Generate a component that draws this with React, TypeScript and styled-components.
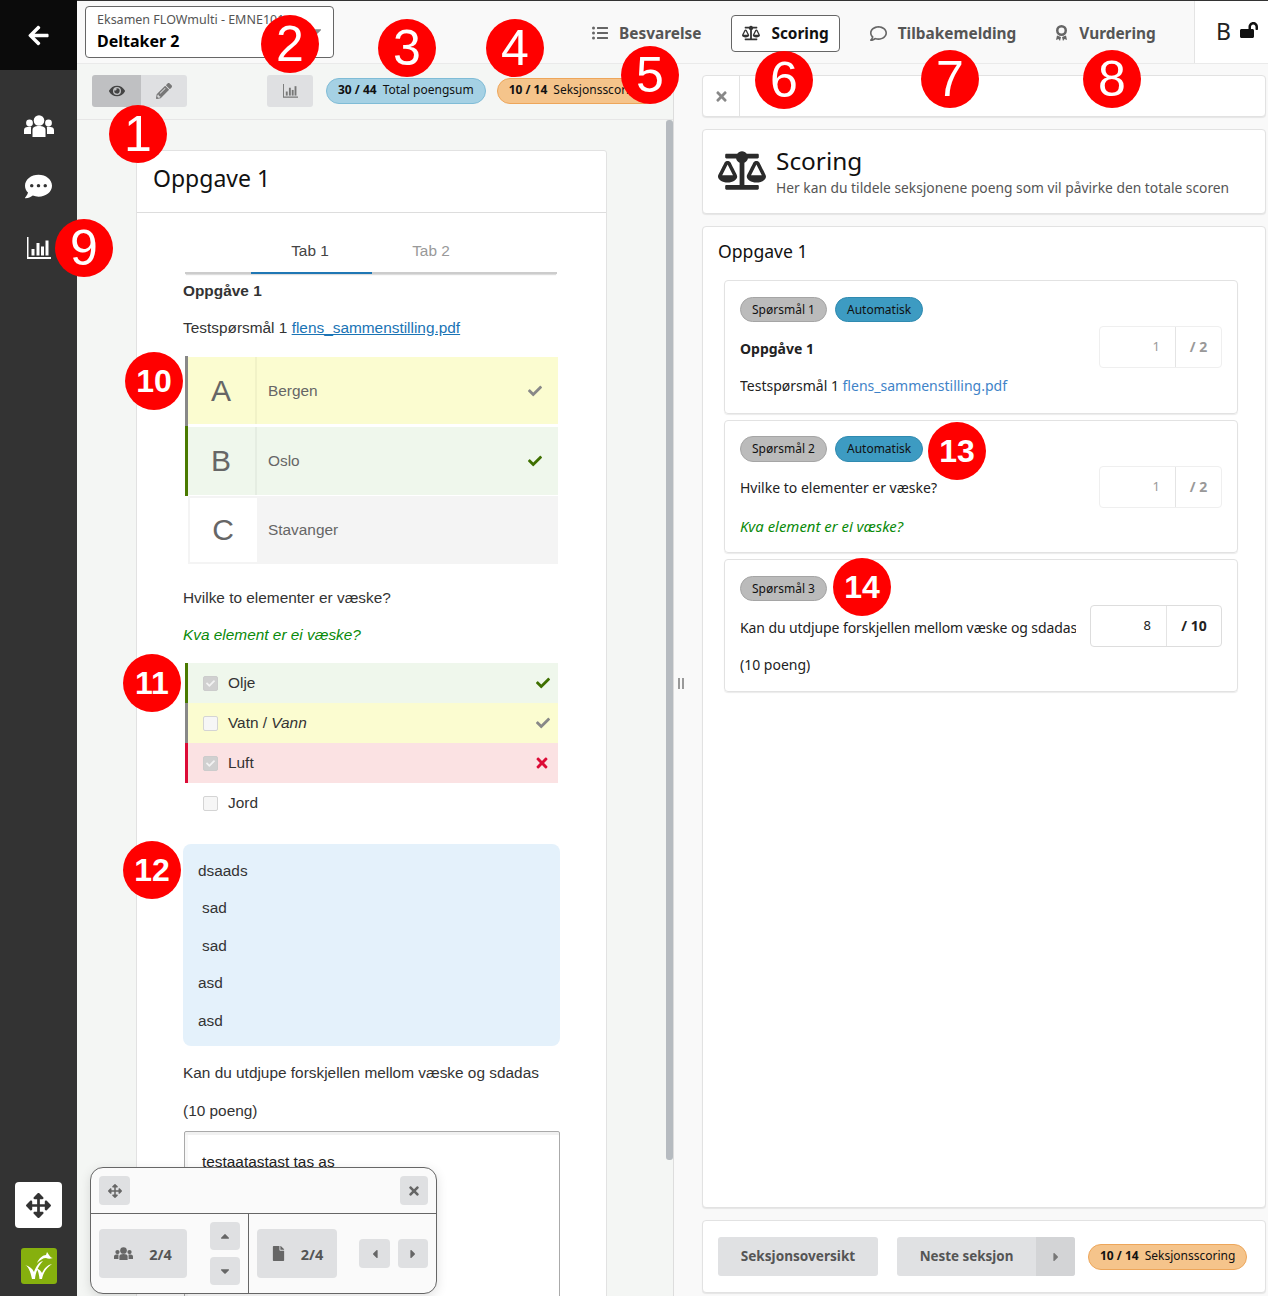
import React from "react";
import styled, { createGlobalStyle } from "styled-components";
import {
  FaArrowLeft, FaCommentDots, FaArrowsAlt, FaEye, FaPencilAlt, FaTimes,
  FaBalanceScale, FaListUl, FaRegComment, FaLockOpen, FaCheck, FaFile, FaCaretUp, FaCaretDown,
  FaCaretLeft, FaCaretRight,
} from "react-icons/fa";

const ui = `"Noto Sans", "Liberation Sans", sans-serif`;
const body = `"Liberation Sans", Arial, sans-serif`;

const Global = createGlobalStyle`
  html, body { margin: 0; padding: 0; background: #fff; }
  * { box-sizing: border-box; }
`;

const Page = styled.div`
  position: relative; display: flex; width: 1268px; height: 1296px; overflow: hidden;
  font-family: ${ui}; color: #222;
`;
const Sidebar = styled.aside`
  width: 77px; flex: none; display: flex; flex-direction: column; align-items: center;
  background: #333; color: #fff;
`;
const BackBar = styled.div`
  width: 100%; height: 70px; background: #0b0b0b; display: flex; align-items: center; justify-content: center;
  font-size: 23px;
`;
const SideNav = styled.nav`
  display: flex; flex-direction: column; align-items: center; gap: 30px; padding-top: 40px; flex: 1;
`;
const NavItem = styled.div`height: 31px; display: flex; align-items: center; justify-content: center;`;
const MoveBox = styled.div`
  width: 47px; height: 46px; background: #fff; color: #333; border-radius: 4px; display: flex;
  align-items: center; justify-content: center; font-size: 25px; margin-bottom: 20px;
`;
const Logo = styled.div`
  width: 36px; height: 36px; background: #86b00e; border-radius: 3px; margin-bottom: 12px; display: flex;
  align-items: center; justify-content: center;
`;
const Main = styled.div`flex: 1; display: flex; flex-direction: column; min-width: 0;`;
const Header = styled.header`
  height: 64px; flex: none; display: flex; align-items: stretch; background: #f9f9f9;
  border-top: 1px solid #333; border-bottom: 1px solid #eaeaea; padding-left: 8px;
`;
const Selector = styled.div`
  position: relative; width: 249px; height: 52px; margin-top: 5px; background: #fff; border: 1px solid #666; border-radius: 4px;
  padding: 4px 11px; overflow: hidden;
`;
const SelTop = styled.div`font-size: 12.5px; color: #555; line-height: 18px; white-space: nowrap;`;
const SelBot = styled.div`font-size: 16px; font-weight: 700; color: #000; line-height: 24px;`;
const Drop = styled.span`position: absolute; right: 9px; top: 16px; color: #888; font-size: 14px;`;
const Tabs = styled.div`
  flex: 1; display: flex; align-items: center; padding: 2px 0 0 247px;
`;
const HTab = styled.div<{ $active?: boolean; $w: number }>`
  display: flex; align-items: center; gap: 11px; height: 37px; padding: 0 10px; margin-right: ${p => p.$w}px;
  font-size: 15.4px; font-weight: 700; white-space: nowrap; color: ${p => (p.$active ? "#111" : "#555")};
  border: 1px solid ${p => (p.$active ? "#666" : "transparent")}; border-radius: 4px;
  background: ${p => (p.$active ? "#fff" : "transparent")};
  svg { color: ${p => (p.$active ? "#333" : "#666")}; font-size: 16px; flex: none; }
`;
const Lang = styled.div`
  width: 74px; flex: none; border-left: 1px solid #e4e4e4; background: #fff; display: flex; align-items: center;
  gap: 9px; font-size: 23px; color: #222; padding: 0 0 2px 21px; font-weight: 400;
  svg { font-size: 18px; color: #111; margin-top: -2px; flex: none; }
`;
const Work = styled.div`flex: 1; display: flex; min-height: 0;`;
const LeftPane = styled.section`width: 596px; flex: none; display: flex; flex-direction: column; background: #f4f6f4;`;
const Toolbar = styled.div`
  height: 56px; flex: none; display: flex; align-items: flex-start; padding: 11px 0 0 15px; border-bottom: 1px solid #e6e6e6; overflow: hidden;
`;
const Toggle = styled.div`display: flex; height: 32px; border-radius: 3px; overflow: hidden;`;
const ToggleBtn = styled.div<{ $on?: boolean; $w: number }>`
  width: ${p => p.$w}px; display: flex; align-items: center; justify-content: center; font-size: 16px;
  background: ${p => (p.$on ? "#bfc0c2" : "#dfe0e2")}; color: ${p => (p.$on ? "#444" : "#777")};
`;
const ChartBtn = styled.div`
  width: 46px; height: 32px; margin-left: 80px; border-radius: 3px; background: #dfe0e2; color: #777;
  display: flex; align-items: center; justify-content: center;
`;
const Pill = styled.div<{ $tone: "blue" | "orange" }>`
  height: 26px; border-radius: 13px; padding: 0 11px 3px; display: inline-flex; align-items: center; gap: 6px; flex: none;
  font-size: 12px; color: #111; white-space: nowrap;
  background: ${p => (p.$tone === "blue" ? "#a5d1e4" : "#f5c48b")};
  border: 1px solid ${p => (p.$tone === "blue" ? "#7fbcd6" : "#eda65a")};
  b { font-weight: 700; }
`;
const ToolPill = styled(Pill)<{ $ml: number }>`margin: 3px 0 0 ${p => p.$ml}px;`;
const LeftBody = styled.div`flex: 1; display: flex; min-height: 0;`;
const Scroll = styled.div`flex: 1; min-width: 0; overflow: hidden; padding: 30px 0 0 59px;`;
const Thumb = styled.div`width: 7px; height: 1040px; background: #b6bbc0; flex: none; border-radius: 3px;`;
const Sheet = styled.article`
  width: 471px; height: 1300px; background: #fff; border: 1px solid #e2e2e2; border-radius: 3px; font-family: ${body};
  font-size: 15.4px; color: #333;
`;
const SheetHead = styled.div`
  height: 62px; border-bottom: 1px solid #ddd; padding: 9px 16px; font-family: ${ui}; font-size: 23px; color: #111; line-height: 36px;
`;
const SheetBody = styled.div`padding: 17px 47px 0 46px;`;
const TabRow = styled.div`
  height: 44px; margin: 0 2px 0 2px; display: flex; padding-left: 66px; border-bottom: 2px solid #ccc; box-shadow: 0 2px 1px -1px #ddd;
`;
const Tab = styled.div<{ $on?: boolean }>`
  width: 121px; height: 44px; text-align: center; line-height: 42px; color: ${p => (p.$on ? "#444" : "#999")};
  border-bottom: 2px solid ${p => (p.$on ? "#1f77b4" : "transparent")}; padding-right: 3px;
`;
const P = styled.p<{ $t: number }>`
  margin: ${p => p.$t}px 0 0 0; line-height: 21px; white-space: pre-wrap;
`;
const Link = styled.a`color: #1a74b5; text-decoration: underline;`;
const Green = styled.em`color: #0a8a0a;`;
const Opts = styled.div`margin-top: 18px; width: 373px; margin-left: 2px;`;
const Opt = styled.div<{ $bar: string; $h: number; $pt: number; $mb: number }>`
  display: flex; height: ${p => p.$h}px; padding: ${p => p.$pt}px 0 ${p => p.$mb}px 0; border-left: 3px solid ${p => p.$bar};
`;
const OptIn = styled.div<{ $bg: string }>`flex: 1; display: flex; align-items: center; background: ${p => p.$bg};`;
const Letter = styled.div<{ $white?: boolean }>`
  width: 69px; height: 100%; display: flex; align-items: center; justify-content: center; font-size: 30px; color: #666; padding-right: 1px;
  border-right: 2px solid rgba(0,0,0,.04);
  ${p => p.$white && "background:#fff; border:2px solid #f4f4f4; border-right:0;"}
`;
const OptText = styled.span`margin-left: 11px; color: #666; flex: 1;`;
const Mark = styled.span<{ $c: string; $r: number; $s?: number }>`
  color: ${p => p.$c}; font-size: ${p => p.$s ?? 14}px; margin-right: ${p => p.$r}px; display: flex;
`;
const Checks = styled.div`margin-top: 18px; width: 373px; margin-left: 2px;`;
const CheckRow = styled.div<{ $bg: string; $bar: string }>`
  height: 40px; display: flex; align-items: center; background: ${p => p.$bg}; border-left: 3px solid ${p => p.$bar};
  padding-left: 15px; color: #333;
`;
const Box = styled.span<{ $on?: boolean }>`
  width: 15px; height: 15px; border-radius: 2px; margin-right: 10px; flex: none; display: flex; align-items: center; justify-content: center;
  background: ${p => (p.$on ? "#d0d0d0" : "#f6f6f6")}; border: 1px solid ${p => (p.$on ? "#ccc" : "#d4d4d4")}; color: #f2f2f2; font-size: 9px;
`;
const RowText = styled.span`flex: 1;`;
const Blue = styled.div`
  margin-top: 21px; background: #e4f1fb; border-radius: 8px; width: 377px; height: 202px; padding: 16px 15px; color: #333;
`;
const BlueLine = styled.div<{ $i?: boolean }>`height: 37.4px; line-height: 21px; padding-left: ${p => (p.$i ? 4 : 0)}px;`;
const Answer = styled.div`
  margin: 10px 0 0 1px; width: 376px; height: 200px; border: 1px solid #aaa; border-radius: 2px; padding: 21px 17px; color: #222; box-shadow: inset 0 3px 0 #f1f1f1, inset 3px 0 0 #f8f8f8;
`;
const Splitter = styled.div`
  width: 17px; flex: none; background: #f9f9f9; border-left: 1px solid #ddd; display: flex; align-items: flex-start; justify-content: center; padding-top: 614px;
  padding-right: 3px; gap: 2px;
  i { display: block; width: 2px; height: 11px; background: #999; }
`;
const RightPane = styled.section`
  flex: 1; display: flex; flex-direction: column; gap: 12px; background: #f9f9f9; padding: 11px 2px 3px 12px; min-width: 0;
`;
const Card = styled.div`
  background: #fff; border: 1px solid #e2e2e2; border-radius: 4px; box-shadow: 0 1px 1px rgba(0,0,0,.08); flex: none;
`;
const CloseCard = styled(Card)`height: 42px; display: flex;`;
const CloseBtn = styled.div`
  width: 37px; border-right: 1px solid #e2e2e2; display: flex; align-items: center; justify-content: center; color: #888; font-size: 15px;
`;
const TitleCard = styled(Card)`height: 85px; display: flex; padding: 11px 15px 13px; gap: 10px; align-items: center;`;
const TitleIcon = styled.div`font-size: 43px; color: #2b2b2b; display: flex; width: 48px; svg { width: 48px; }`;
const TitleText = styled.div`display: flex; flex-direction: column;`;
const H1 = styled.div`font-size: 24.4px; line-height: 32px; color: #111; margin-bottom: 2px;`;
const Sub = styled.div`font-size: 13.8px; line-height: 18px; color: #555;`;
const ListCard = styled(Card)`flex: 1; padding: 11px 27px 0 21px; min-height: 0;`;
const H2 = styled.div`font-size: 17.6px; line-height: 26px; color: #111; margin: 0 0 16px -6px;`;
const Q = styled.div<{ $h: number; $p: number }>`
  height: ${p => p.$h}px; border: 1px solid #e2e2e2; border-radius: 4px; box-shadow: 0 1px 1px rgba(0,0,0,.08); margin-bottom: 6px; padding: ${p => p.$p}px 15px 0 15px;
`;
const Tags = styled.div<{ $h: number }>`display: flex; gap: 8px; height: ${p => p.$h}px;`;
const Tag = styled.span<{ $blue?: boolean }>`
  height: 100%; border-radius: 13px; padding: 0 11px 1px; display: flex; align-items: center; font-size: 12px; color: #111; white-space: nowrap;
  background: ${p => (p.$blue ? "#3d9bc2" : "#bbb")}; border: 1px solid ${p => (p.$blue ? "#2f8ab0" : "#a5a5a5")};
`;
const QRow = styled.div`display: flex; gap: 14px; margin-top: 4px;`;
const QText = styled.div<{ $t: number }>`flex: 1; min-width: 0; overflow: hidden; font-size: 14px; line-height: 20px; color: #222; white-space: nowrap; padding-top: ${p => p.$t}px;`;
const QLine = styled.div<{ $t?: number }>`margin-top: ${p => p.$t ?? 0}px;`;
const QLong = styled(QLine)`letter-spacing: -.1px;`;
const QBold = styled.b`font-weight: 700;`;
const QLink = styled.a`color: #3f83c8;`;
const QItalic = styled.em`color: #0a8a0a; font-size: 14.9px;`;
const Score = styled.div<{ $on?: boolean }>`
  flex: none; display: flex; height: 42px; border: 1px solid ${p => (p.$on ? "#ddd" : "#efefef")}; border-radius: 4px; font-size: 13px;
  color: ${p => (p.$on ? "#222" : "#999")}; padding-bottom: 2px;
`;
const ScoreIn = styled.div`
  width: 76px; margin-bottom: -2px; padding: 0 15px 2px 0; border-right: 1px solid #e4e4e4; display: flex; align-items: center; justify-content: flex-end;
`;
const ScoreMax = styled.div<{ $w: number }>`
  width: ${p => p.$w}px; display: flex; align-items: center; justify-content: center; font-weight: 700; font-size: 14px;
`;
const FootCard = styled(Card)`height: 73px; display: flex; align-items: center; padding: 0 15px; `;
const FootBtn = styled.div`
  height: 39px; width: 160px; background: #e0e1e3; border-radius: 3px; display: flex; align-items: center; justify-content: center;
  font-size: 13.6px; font-weight: 700; color: #555; padding-bottom: 3px;
`;
const NextBtn = styled.div`
  height: 39px; width: 178px; margin: 0 13px 0 19px; background: #e0e1e3; border-radius: 3px; display: flex; overflow: hidden;
  font-size: 13.4px; font-weight: 700; color: #555;
`;
const NextLabel = styled.div`flex: 1; display: flex; align-items: center; justify-content: center; padding-bottom: 2px;`;
const NextArrow = styled.div`width: 39px; background: #d3d4d6; display: flex; align-items: center; justify-content: center; font-size: 14px; color: #777;`;
const Float = styled.div`
  position: absolute; left: 90px; top: 1167px; width: 347px; height: 127px; background: #fafafa; border: 1px solid #666;
  border-radius: 13px; box-shadow: 0 3px 12px rgba(0,0,0,.12); display: flex; flex-direction: column; overflow: hidden; font-family: ${ui};
`;
const FloatTop = styled.div`
  height: 46px; flex: none; border-bottom: 1px solid #666; display: flex; justify-content: space-between; align-items: center; padding: 0 8px;
`;
const FloatBody = styled.div`flex: 1; display: flex;`;
const FloatSide = styled.div<{ $w: number; $b?: boolean }>`
  width: ${p => p.$w}px; flex: none; display: flex; align-items: center; padding: 0 8px; ${p => p.$b && "border-right:1px solid #666;"}
`;
const FBtn = styled.div<{ $w: number; $h: number }>`
  width: ${p => p.$w}px; height: ${p => p.$h}px; flex: none; background: #dfe0e2; border-radius: 4px; display: flex; align-items: center; justify-content: center;
  color: #666; font-size: 14px;
`;
const Counter = styled(FBtn)<{ $g: number }>`font-size: 14.5px; font-weight: 700; color: #555; gap: ${p => p.$g}px; svg { color: #666; }`;
const Stack = styled.div`display: flex; flex-direction: column; gap: 7px; margin-left: 23px;`;
const Arrows = styled.div`display: flex; gap: 8px; margin-left: 22px;`;
const Marker = styled.div<{ $x: number; $y: number; $big?: boolean }>`
  position: absolute; left: ${p => p.$x - 29}px; top: ${p => p.$y - 29}px; width: 58px; height: 58px; border-radius: 50%; background: #f00;
  color: #fff; font-family: ${body}; font-size: ${p => (p.$big ? 32 : 50)}px; font-weight: ${p => (p.$big ? 700 : 400)};
  display: flex; align-items: center; justify-content: center; line-height: 1;
`;

const markers: [number, number, number][] = [
  [1, 138, 134], [2, 290, 44], [3, 407, 48], [4, 515, 48], [5, 650, 75], [6, 784, 80], [7, 950, 79], [8, 1112, 79],
  [9, 84, 248], [10, 154, 381], [11, 152, 683], [12, 152, 870], [13, 957, 451], [14, 862, 587],
];

const LogoMark = () => (
  <svg width="30" height="30" viewBox="0 0 30 30" fill="#fff">
    <path d="M1 14 C4 15 6 19 8 28 L11 28 C11.500 22 14 15 19 10 C15 11 12 15 10 21 C8 17 5 15 1 14Z" />
    <path d="M12 17 C14 19 15 23 15.500 28 L18 28 C19 23 21 18 28 13 C23 14 20 18 18 22 C17 20 15 18 12 17Z" />
    <path d="M13 12 C15 7 19 4 22 4 L23 1 L25 4 C26 5 27 7 29 7 C26 8 24 8 22 7 C19 7 16 9 13 12Z" />
  </svg>
);
const UsersIcon = ({ w }: { w: number }) => (
  <svg width={w} viewBox="0 0 30 22" fill="currentColor" aria-hidden="true">
    <circle cx="15" cy="5.500" r="5.300" />
    <circle cx="5.500" cy="8" r="3.400" />
    <circle cx="24.500" cy="8" r="3.400" />
    <path d="M8.500 22 V15 C8.500 12 11 11 15 11 C19 11 21.500 12 21.500 15 V22Z" />
    <path d="M0 19 V15 C0 12.500 2 11.800 5.500 11.800 C6.500 11.800 7.200 12 7.200 12 C7 13 7 14 7 15 V19Z" />
    <path d="M30 19 V15 C30 12.500 28 11.800 24.500 11.800 C23.500 11.800 22.800 12 22.800 12 C23 13 23 14 23 15 V19Z" />
  </svg>
);
const ChartIcon = ({ w }: { w: number }) => (
  <svg width={w} viewBox="0 0 24 22" fill="currentColor" aria-hidden="true">
    <path d="M0 0 H1.500 V20 H24 V22 H0Z" />
    <rect x="4.500" y="12" width="3" height="6.500" />
    <rect x="9.500" y="6" width="3" height="12.500" />
    <rect x="14" y="9.500" width="3" height="9" />
    <rect x="18.500" y="3.500" width="3" height="15" />
  </svg>
);
const AwardIcon = () => (
  <svg width="13" height="16" viewBox="0 0 13 16" fill="currentColor" aria-hidden="true">
    <path fillRule="evenodd" d="M6.500 0 A5.500 5.500 0 1 1 6.500 11 A5.500 5.500 0 1 1 6.500 0Z M6.500 2.500 A3 3 0 1 0 6.500 8.500 A3 3 0 1 0 6.500 2.500Z" />
    <path d="M2 10.500 L1 15 L3.500 14 L5 16 L6 12Z M11 10.500 L12 15 L9.500 14 L8 16 L7 12Z" />
  </svg>
);

export default function App() {
  return (
    <Page>
      <Global />
      <Sidebar>
        <BackBar><FaArrowLeft /></BackBar>
        <SideNav>
          <NavItem><UsersIcon w={30} /></NavItem>
          <NavItem><FaCommentDots size={27} /></NavItem>
          <NavItem><ChartIcon w={24} /></NavItem>
        </SideNav>
        <MoveBox><FaArrowsAlt /></MoveBox>
        <Logo><LogoMark /></Logo>
      </Sidebar>
      <Main>
        <Header>
          <Selector>
            <SelTop>Eksamen FLOWmulti - EMNE101</SelTop>
            <SelBot>Deltaker 2</SelBot>
            <Drop><FaCaretDown /></Drop>
          </Selector>
          <Tabs>
            <HTab $w={19}><FaListUl />Besvarelse</HTab>
            <HTab $active $w={19}><FaBalanceScale size={18} />Scoring</HTab>
            <HTab $w={17}><FaRegComment size={17} />Tilbakemelding</HTab>
            <HTab $w={0}><AwardIcon />Vurdering</HTab>
          </Tabs>
          <Lang>B<FaLockOpen /></Lang>
        </Header>
        <Work>
          <LeftPane>
            <Toolbar>
              <Toggle>
                <ToggleBtn $on $w={49}><FaEye /></ToggleBtn>
                <ToggleBtn $w={46}><FaPencilAlt /></ToggleBtn>
              </Toggle>
              <ChartBtn><ChartIcon w={15} /></ChartBtn>
              <ToolPill $tone="blue" $ml={13}><b>30 / 44</b> Total poengsum</ToolPill>
              <ToolPill $tone="orange" $ml={11}><b>10 / 14</b> Seksjonsscoring</ToolPill>
            </Toolbar>
            <LeftBody>
              <Scroll>
                <Sheet>
                  <SheetHead>Oppgave 1</SheetHead>
                  <SheetBody>
                    <TabRow>
                      <Tab $on>Tab 1</Tab>
                      <Tab>Tab 2</Tab>
                    </TabRow>
                    <P $t={6}><b>Oppgåve 1</b></P>
                    <P $t={16}>Testspørsmål 1 <Link>flens_sammenstilling.pdf</Link></P>
                    <Opts>
                      <Opt $h={70} $pt={1} $mb={2} $bar="#888">
                        <OptIn $bg="#fbfcd0"><Letter>A</Letter><OptText>Bergen</OptText><Mark $c="#888" $r={16}><FaCheck /></Mark></OptIn>
                      </Opt>
                      <Opt $h={70} $pt={1} $mb={1} $bar="#4a7a00">
                        <OptIn $bg="#eff7ec"><Letter>B</Letter><OptText>Oslo</OptText><Mark $c="#3f7000" $r={16}><FaCheck /></Mark></OptIn>
                      </Opt>
                      <Opt $h={68} $pt={0} $mb={0} $bar="transparent">
                        <OptIn $bg="#f4f4f4"><Letter $white>C</Letter><OptText>Stavanger</OptText></OptIn>
                      </Opt>
                    </Opts>
                    <P $t={23}>Hvilke to elementer er væske?</P>
                    <P $t={16}><Green>Kva element er ei væske?</Green></P>
                    <Checks>
                      <CheckRow $bg="#eff7ec" $bar="#4a7a00"><Box $on><FaCheck /></Box><RowText>Olje</RowText><Mark $c="#3f7000" $r={8}><FaCheck /></Mark></CheckRow>
                      <CheckRow $bg="#fbfcd0" $bar="#888"><Box /><RowText>Vatn / <em>Vann</em></RowText><Mark $c="#888" $r={8}><FaCheck /></Mark></CheckRow>
                      <CheckRow $bg="#fbe2e3" $bar="#dc0b36"><Box $on><FaCheck /></Box><RowText>Luft</RowText><Mark $c="#dc0b36" $r={8} $s={16}><FaTimes /></Mark></CheckRow>
                      <CheckRow $bg="transparent" $bar="transparent"><Box /><RowText>Jord</RowText></CheckRow>
                    </Checks>
                    <Blue>
                      <BlueLine>dsaads</BlueLine>
                      <BlueLine $i>sad</BlueLine>
                      <BlueLine $i>sad</BlueLine>
                      <BlueLine>asd</BlueLine>
                      <BlueLine>asd</BlueLine>
                    </Blue>
                    <P $t={16}>Kan du utdjupe forskjellen mellom væske og sdadas</P>
                    <P $t={17}>(10 poeng)</P>
                    <Answer>testaatastast tas as</Answer>
                  </SheetBody>
                </Sheet>
              </Scroll>
              <Thumb />
            </LeftBody>
          </LeftPane>
          <Splitter><i /><i /></Splitter>
          <RightPane>
            <CloseCard><CloseBtn><FaTimes /></CloseBtn></CloseCard>
            <TitleCard>
              <TitleIcon><FaBalanceScale /></TitleIcon>
              <TitleText>
                <H1>Scoring</H1>
                <Sub>Her kan du tildele seksjonene poeng som vil påvirke den totale scoren</Sub>
              </TitleText>
            </TitleCard>
            <ListCard>
              <H2>Oppgave 1</H2>
              <Q $h={134} $p={16}>
                <Tags $h={25}><Tag>Spørsmål 1</Tag><Tag $blue>Automatisk</Tag></Tags>
                <QRow>
                  <QText $t={13}>
                    <QLine><QBold>Oppgåve 1</QBold></QLine>
                    <QLine $t={17}>Testspørsmål 1 <QLink>flens_sammenstilling.pdf</QLink></QLine>
                  </QText>
                  <Score><ScoreIn>1</ScoreIn><ScoreMax $w={45}>/ 2</ScoreMax></Score>
                </QRow>
              </Q>
              <Q $h={133} $p={15}>
                <Tags $h={26}><Tag>Spørsmål 2</Tag><Tag $blue>Automatisk</Tag></Tags>
                <QRow>
                  <QText $t={12}>
                    <QLine>Hvilke to elementer er væske?</QLine>
                    <QLine $t={18}><QItalic>Kva element er ei væske?</QItalic></QLine>
                  </QText>
                  <Score><ScoreIn>1</ScoreIn><ScoreMax $w={45}>/ 2</ScoreMax></Score>
                </QRow>
              </Q>
              <Q $h={133} $p={16}>
                <Tags $h={25}><Tag>Spørsmål 3</Tag></Tags>
                <QRow>
                  <QText $t={13}>
                    <QLong>Kan du utdjupe forskjellen mellom væske og sdadas</QLong>
                    <QLine $t={17}>(10 poeng)</QLine>
                  </QText>
                  <Score $on><ScoreIn>8</ScoreIn><ScoreMax $w={54}>/ 10</ScoreMax></Score>
                </QRow>
              </Q>
            </ListCard>
            <FootCard>
              <FootBtn>Seksjonsoversikt</FootBtn>
              <NextBtn><NextLabel>Neste seksjon</NextLabel><NextArrow><FaCaretRight /></NextArrow></NextBtn>
              <Pill $tone="orange"><b>10 / 14</b> Seksjonsscoring</Pill>
            </FootCard>
          </RightPane>
        </Work>
      </Main>
      <Float>
        <FloatTop>
          <FBtn $w={31} $h={29}><FaArrowsAlt /></FBtn>
          <FBtn $w={28} $h={29}><FaTimes /></FBtn>
        </FloatTop>
        <FloatBody>
          <FloatSide $w={158} $b>
            <Counter $w={88} $h={49} $g={16}><UsersIcon w={19} />2/4</Counter>
            <Stack>
              <FBtn $w={30} $h={28}><FaCaretUp /></FBtn>
              <FBtn $w={30} $h={28}><FaCaretDown /></FBtn>
            </Stack>
          </FloatSide>
          <FloatSide $w={188}>
            <Counter $w={80} $h={49} $g={15}><FaFile size={15} />2/4</Counter>
            <Arrows>
              <FBtn $w={31} $h={29}><FaCaretLeft /></FBtn>
              <FBtn $w={30} $h={29}><FaCaretRight /></FBtn>
            </Arrows>
          </FloatSide>
        </FloatBody>
      </Float>
      {markers.map(([n, x, y]) => <Marker key={n} $x={x} $y={y} $big={n > 9}>{n}</Marker>)}
    </Page>
  );
}
